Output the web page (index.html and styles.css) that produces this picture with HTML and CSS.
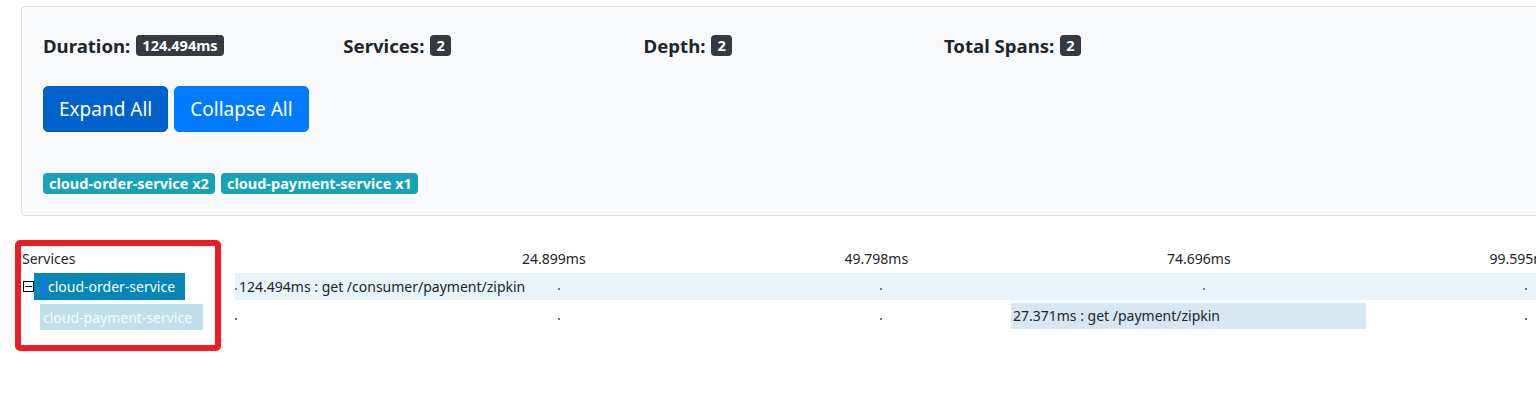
FILE: index.html
```html
<!DOCTYPE html>
<html lang="en">
<head>
<meta charset="utf-8">
<title>Trace</title>
<link rel="stylesheet" href="styles.css">
</head>
<body>
<div class="page">
  <section class="summary">
    <div class="stats">
      <div class="stat">Duration: <span class="count">124.494ms</span></div>
      <div class="stat">Services: <span class="count">2</span></div>
      <div class="stat">Depth: <span class="count">2</span></div>
      <div class="stat">Total Spans: <span class="count">2</span></div>
    </div>
    <div class="actions">
      <button class="btn btn-active">Expand All</button>
      <button class="btn">Collapse All</button>
    </div>
    <div class="svc-list">
      <span class="svc-badge">cloud-order-service x2</span>
      <span class="svc-badge">cloud-payment-service x1</span>
    </div>
  </section>

  <section class="trace">
    <div class="trace-row head">
      <div class="svc-col">Services</div>
      <div class="lane axis">
        <span class="tick-label" style="left:20%">24.899ms</span>
        <span class="tick-label" style="left:40%">49.798ms</span>
        <span class="tick-label" style="left:60%">74.696ms</span>
        <span class="tick-label" style="left:80%">99.595ms</span>
      </div>
    </div>

    <div class="trace-row">
      <div class="svc-col">
        <span class="toggle"></span>
        <span class="svc svc-root"><i class="caret"></i>cloud-order-service</span>
      </div>
      <div class="lane lane-root">
        <i class="tick" style="left:0%"></i>
        <i class="tick" style="left:20%"></i>
        <i class="tick" style="left:40%"></i>
        <i class="tick" style="left:60%"></i>
        <i class="tick" style="left:80%"></i>
        <span class="span-label root-label">124.494ms : get /consumer/payment/zipkin</span>
      </div>
    </div>

    <div class="trace-row">
      <div class="svc-col">
        <span class="svc svc-child">cloud-payment-service</span>
      </div>
      <div class="lane">
        <i class="tick" style="left:0%"></i>
        <i class="tick" style="left:20%"></i>
        <i class="tick" style="left:40%"></i>
        <i class="tick" style="left:60%"></i>
        <i class="tick" style="left:80%"></i>
        <div class="bar" style="left:48.12%;width:22.01%"><span class="span-label">27.371ms : get /payment/zipkin</span></div>
      </div>
    </div>
  </section>

  <div class="annotation"></div>
</div>
</body>
</html>
```

FILE: styles.css
```css
* { box-sizing: border-box; }

html {
  overflow: hidden;
  background: #fff;
}

body {
  margin: 0;
  min-height: 400px;
  font-family: "Noto Sans", "Open Sans", sans-serif;
  font-size: 14px;
  color: #212529;
}

.page {
  position: relative;
  width: 1900px;
  min-height: 400px;
  padding: 6px 0 0 21px;
}

/* ---------- summary card ---------- */
.summary {
  width: 1560px;
  background: #f8f9fa;
  border: 1px solid #dadde1;
  border-radius: 4px;
  padding: 25px 21px 21px;
}

.stats {
  display: grid;
  grid-template-columns: repeat(4, 300.3px);
  height: 27px;
  align-items: center;
}

.stat {
  display: flex;
  align-items: center;
  gap: 6px;
  font-size: 18.6px;
  font-weight: 700;
  line-height: 27px;
  white-space: nowrap;
}

.count {
  display: inline-block;
  height: 21px;
  padding: 0 6px;
  background: #343a40;
  color: #fff;
  font-size: 14.5px;
  font-weight: 700;
  line-height: 21px;
  border-radius: 4px;
}

.actions {
  display: flex;
  gap: 6px;
  margin-top: 27px;
}

.btn {
  font-family: inherit;
  font-size: 19px;
  line-height: 28px;
  padding: 8px 15px;
  color: #fff;
  background: #007bff;
  border: 1px solid #007bff;
  border-radius: 5px;
}

.btn-active {
  background: #0062cc;
  border-color: #005cbf;
}

.svc-list {
  display: flex;
  gap: 6px;
  margin-top: 41px;
}

.svc-badge {
  height: 21px;
  padding: 0 6px;
  background: #17a2b8;
  color: #fff;
  font-size: 14.5px;
  font-weight: 700;
  line-height: 21px;
  border-radius: 4px;
  white-space: nowrap;
}

/* ---------- trace view ---------- */
.trace {
  margin-top: 32px;
  padding-left: 1px;
}

.trace-row {
  display: flex;
  height: 27px;
  margin-top: 3px;
}

.trace-row.head {
  height: 22px;
  margin-top: 0;
  line-height: 22px;
}

.svc-col {
  flex: none;
  width: 213px;
  display: flex;
  align-items: center;
  white-space: nowrap;
}

.lane {
  position: relative;
  flex: none;
  width: 1612.5px;
  white-space: nowrap;
}

.lane-root {
  background: #eaf2f9;
}

.tick-label {
  position: absolute;
  top: 0;
  margin-left: -35.5px;
  line-height: 22px;
}

.toggle {
  position: relative;
  flex: none;
  width: 11px;
  height: 11px;
  margin-left: 1px;
  border: 1px solid #000;
  background: #fff;
}

.toggle::after {
  content: "";
  position: absolute;
  left: 1px;
  right: 1px;
  top: 4px;
  height: 1px;
  background: #000;
}

.svc {
  display: flex;
  align-items: center;
  font-size: 14px;
}

.svc-root {
  height: 27px;
  padding: 0 10px 0 8px;
  background: #0586b5;
  color: #fff;
}

.caret {
  width: 3px;
  height: 20px;
  margin-right: 3px;
  background: #1a6ff0;
}

.svc-child {
  height: 26px;
  margin-left: 18px;
  margin-top: 1px;
  padding: 0 11px 0 3px;
  background: #bfe0ea;
  color: #f6fbfd;
}

.tick {
  position: absolute;
  top: 15px;
  width: 2px;
  height: 2px;
  background: #6f7b88;
}

.span-label {
  position: relative;
  display: block;
  line-height: 27px;
}

.root-label {
  padding-left: 4px;
}

.bar {
  position: absolute;
  top: 0;
  height: 26px;
  background: #d6e7f1;
}

.bar .span-label {
  padding-left: 2px;
  line-height: 26px;
}

/* annotation overlay drawn over the screenshot */
.annotation {
  position: absolute;
  left: 15px;
  top: 240px;
  width: 206px;
  height: 111px;
  border: 6px solid #ed1c24;
  border-radius: 5px;
  pointer-events: none;
}
```
